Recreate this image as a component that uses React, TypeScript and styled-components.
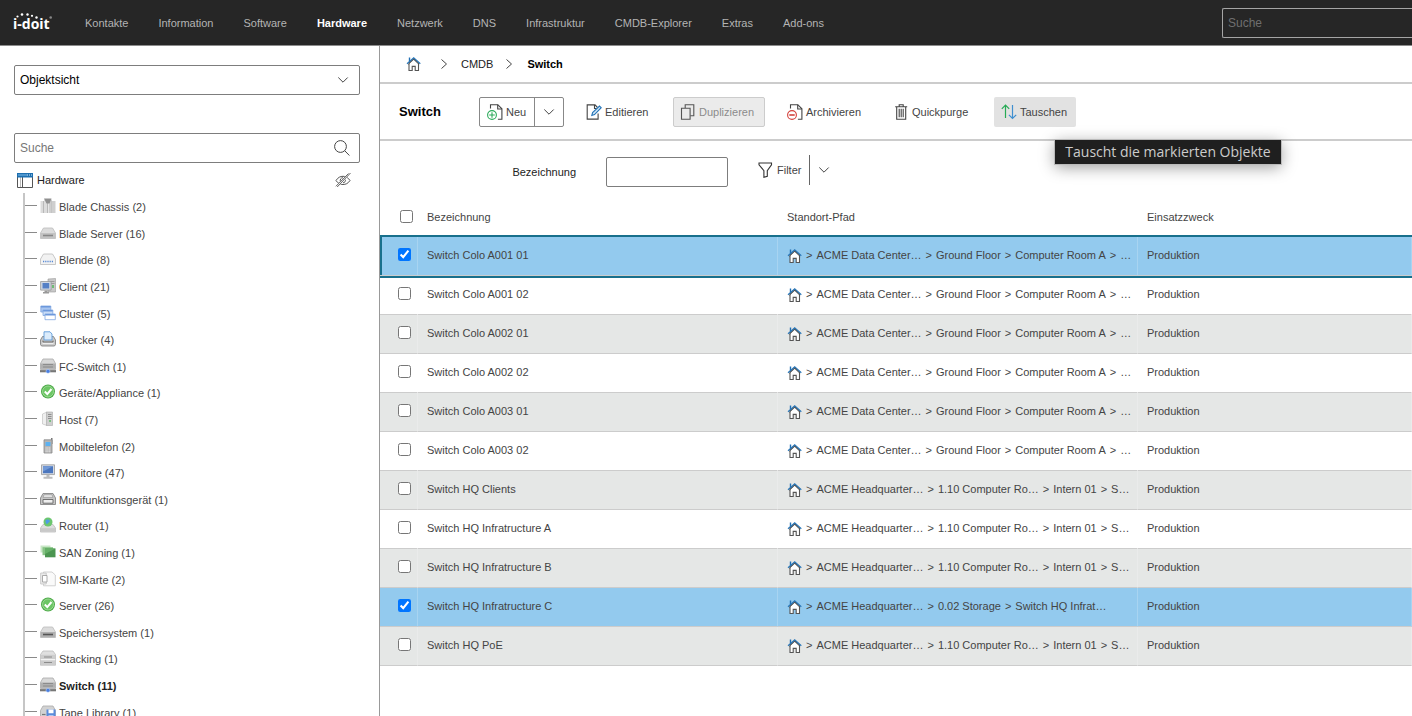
import React from "react";
import styled, { createGlobalStyle, css } from "styled-components";

const GlobalStyle = createGlobalStyle`
  *, *::before, *::after { box-sizing: border-box; }
  html, body { margin: 0; height: 100%; }
  body {
    background: #fff;
    color: #444;
    font: 11px/16px "Liberation Sans", Arial, sans-serif;
    overflow: hidden;
  }
  button, input, select { font: inherit; color: inherit; margin: 0; }
  svg { display: block; flex: none; }
`;

/* ---------- shell ---------- */

const Shell = styled.div`
  display: flex;
  flex-direction: column;
  height: 100vh;
`;

const TopBar = styled.header`
  flex: none;
  display: flex;
  align-items: center;
  height: 46px;
  padding-left: 13px;
  background: #262626;
  border-bottom: 1px solid #8c8c8c;
`;

const HomeLink = styled.a`
  display: block;
  width: 72px;
`;

const Nav = styled.nav`
  flex: 1;
  display: flex;
  gap: 30px;
`;

const NavLink = styled.a<{ $active?: boolean }>`
  color: ${(p) => (p.$active ? "#fff" : "#b4b4b4")};
  font-weight: ${(p) => (p.$active ? 700 : 400)};
  text-decoration: none;
  white-space: nowrap;
`;

const GlobalSearch = styled.input`
  width: 190px;
  height: 30px;
  padding: 0 5px;
  border: 1px solid #a5a5a5;
  border-right: 0;
  border-radius: 2px 0 0 2px;
  background: transparent;
  color: #ccc;
  font-size: 12px;
  &::placeholder { color: #6f6f6f; opacity: 1; }
`;

const Columns = styled.div`
  flex: 1;
  display: flex;
  min-height: 0;
`;

/* ---------- sidebar ---------- */

const Sidebar = styled.aside`
  flex: none;
  width: 380px;
  padding: 19px 19px 0 14px;
  border-right: 1px solid #999;
  overflow: hidden;
`;

const Field = styled.div`
  position: relative;
  height: 30px;
  > svg {
    position: absolute;
    top: 7px;
    right: 10px;
    pointer-events: none;
  }
  & + & { margin-top: 38px; }
`;

const fieldBox = css`
  width: 100%;
  height: 30px;
  padding: 0 5px;
  border: 1px solid #7d7d7d;
  border-radius: 2px;
  background: #fff;
  color: #000;
  font-size: 12px;
  &::placeholder { color: #777; opacity: 1; }
`;

const ViewSelect = styled.select`
  ${fieldBox}
  appearance: none;
`;

const TreeSearch = styled.input`
  ${fieldBox}
`;

const TreeBlock = styled.section`
  padding-top: 8px;
`;

const TreeHead = styled.div`
  display: flex;
  align-items: center;
  gap: 4px;
  height: 18px;
  margin-bottom: 4px;
  padding: 0 9px 0 3px;
  color: #222;
`;

const IconButton = styled.button`
  margin-left: auto;
  padding: 0;
  border: 0;
  background: none;
`;

const Tree = styled.ul`
  display: grid;
  grid-auto-rows: 1fr;
  height: 532px;
  margin: 0 0 0 9px;
  padding: 0;
  border-left: 2px solid #c6c6c6;
  list-style: none;
`;

const TreeItem = styled.li`
  display: flex;
  align-items: center;
  &::before {
    content: "";
    width: 12px;
    height: 1px;
    margin: 0 3px 1px 0;
    background: #8a8a8a;
  }
`;

const TreeLink = styled.a<{ $active?: boolean }>`
  display: flex;
  align-items: center;
  gap: 3px;
  color: ${(p) => (p.$active ? "#222" : "#444")};
  font-weight: ${(p) => (p.$active ? 700 : 400)};
  text-decoration: none;
`;

const TreeLabel = styled.span`
  padding-top: 2px;
`;

/* ---------- main ---------- */

const Main = styled.main`
  flex: 1;
  min-width: 0;
  overflow: hidden;
`;

const Crumbs = styled.nav`
  display: flex;
  align-items: center;
  height: 38px;
  padding-left: 26px;
  border-bottom: 2px solid #ccc;
`;

const CrumbLink = styled.a<{ $current?: boolean }>`
  color: ${(p) => (p.$current ? "#000" : "#222")};
  font-weight: ${(p) => (p.$current ? 700 : 400)};
  text-decoration: none;
`;

const CrumbArrow = styled.span<{ $before: number; $after: number }>`
  padding: 0 ${(p) => p.$after}px 0 ${(p) => p.$before}px;
`;

const Toolbar = styled.div`
  display: flex;
  align-items: center;
  gap: 15px;
  height: 57px;
  padding-left: 19px;
  border-bottom: 2px solid #ccc;
`;

const Title = styled.h1`
  width: 65px;
  margin: 0;
  color: #000;
  font-size: 13px;
  line-height: 16px;
`;

const SplitButton = styled.div`
  display: flex;
  height: 30px;
  border: 1px solid #888;
  border-radius: 2px;
`;

const SplitMain = styled.button`
  display: flex;
  align-items: center;
  gap: 3px;
  width: 54px;
  padding: 0 7px;
  border: 0;
  background: none;
`;

const SplitToggle = styled.button`
  display: grid;
  place-items: center;
  width: 29px;
  padding: 0;
  border: 0;
  border-left: 1px solid #888;
  background: none;
`;

const ToolButton = styled.button<{ $width: number; $hover?: boolean }>`
  position: relative;
  display: flex;
  align-items: center;
  gap: 3px;
  min-width: ${(p) => p.$width}px;
  height: 30px;
  padding: 0 6px;
  border: 1px solid transparent;
  border-radius: 2px;
  background: ${(p) => (p.$hover ? "#e2e2e2" : "transparent")};
  white-space: nowrap;
  &:disabled {
    border-color: #ccc;
    background: #ebebeb;
    color: #8c8c8c;
  }
`;

const Tooltip = styled.span`
  position: absolute;
  z-index: 2;
  top: 42px;
  left: 60px;
  width: 226px;
  height: 24px;
  background: #1f1f1f;
  box-shadow: 0 0 0 1px #bbb, 0 3px 16px rgba(0, 0, 0, 0.4);
  color: #ccc;
  font: 14px/23px "Open Sans", "Noto Sans", sans-serif;
  text-align: center;
`;

const FilterBar = styled.form`
  display: flex;
  height: 57px;
  padding-top: 14px;
`;

const FilterLabel = styled.label`
  width: 196px;
  margin-right: 30px;
  color: #222;
  line-height: 34px;
  text-align: right;
`;

const FilterInput = styled.input`
  width: 122px;
  height: 30px;
  margin: 2px 22px 0 0;
  padding: 0 5px;
  border: 1px solid #7d7d7d;
  border-radius: 2px;
`;

const FilterButton = styled.button`
  display: flex;
  align-items: center;
  gap: 4px;
  width: 60px;
  height: 30px;
  padding: 0 8px;
  border: 0;
  border-right: 1px solid #666;
  background: none;
`;

const FilterToggle = styled.button`
  display: grid;
  place-items: center;
  width: 28px;
  height: 30px;
  padding: 0;
  border: 0;
  background: none;
`;

/* ---------- object table ---------- */

const Table = styled.table`
  width: 100%;
  border-collapse: separate;
  border-spacing: 0;
  table-layout: fixed;
`;

const Col = styled.col<{ $width?: number }>`
  width: ${(p) => (p.$width ? `${p.$width}px` : "auto")};
`;

const HeadCell = styled.th`
  height: 39px;
  padding: 0 0 2px 9px;
  font-weight: 400;
  text-align: left;
  &:first-child { padding-left: 20px; }
`;

const Cell = styled.td`
  height: 39px;
  padding: 0 0 2px 9px;
  border-right: 1px solid rgba(255, 255, 255, 0.2);
  border-bottom: 1px solid #ccc;
  white-space: nowrap;
  &:first-child { padding: 0 0 3px 18px; }
`;

const Row = styled.tr<{ $tone: "plain" | "grey" | "picked"; $focused?: boolean }>`
  background: ${(p) => ({ plain: "#fff", grey: "#e5e7e6", picked: "#93caee" })[p.$tone]};
  ${(p) =>
    p.$focused &&
    css`
      outline: 2px solid #18708c;
      td:first-child { box-shadow: inset 2px 0 #18708c; }
    `}
`;

const Check = styled.input`
  display: block;
  width: 13px;
  height: 13px;
`;

const Path = styled.div`
  display: flex;
  align-items: center;
  gap: 4px;
  > svg { position: relative; top: 1px; }
`;

/* ---------- line icons ---------- */

const Chevron = () => (
  <svg width="14" height="16" viewBox="0 0 14 16" fill="none" stroke="#444">
    <path d="M2.300 5.500 7 10.200l4.700-4.700" />
  </svg>
);

const ChevronRight = () => (
  <svg width="8" height="12" viewBox="0 0 8 12" fill="none" stroke="#444">
    <path d="m1.500 1.500 5 4.500-5 4.500" />
  </svg>
);

const Magnifier = () => (
  <svg width="16" height="16" viewBox="0 0 16 16" fill="none" stroke="#444">
    <circle cx="6.500" cy="6.500" r="5.900" />
    <path d="m10.700 10.700 4.700 4.800" />
  </svg>
);

const HiddenEye = () => (
  <svg width="16" height="16" viewBox="0 0 16 16" fill="none" stroke="#555">
    <path d="M1 8.500C3 5.300 5.500 4.300 8 4.300s5 1 7 4.200C13 11.700 10.500 12.500 8 12.500S3 11.700 1 8.500Z" />
    <path d="M5.500 10c-.9-2.500.5-4.300 2.500-4.300M10.300 7.500c.5 1.800-.6 3.200-2.300 3.300" />
    <path d="M14.500 1.300 1.500 15" stroke="#fff" strokeWidth="2.500" />
    <path d="M15.500 1 2.200 15M13.500 1.500 .9 14.300" strokeWidth=".9" />
  </svg>
);

const WindowIcon = () => (
  <svg width="16" height="16" viewBox="0 0 16 16">
    <path d="M.5 4.500v11h15v-11" fill="#fff" stroke="#555" />
    <path d="M5.500 5v10" stroke="#555" />
    <path d="M3.500 5v10" stroke="#bbb" />
    <path d="M0 1h16v4.500H0z" fill="#1d6fb0" />
    <path d="M1 3h9" stroke="#7fbbe8" />
    <path d="M10 3h5" stroke="#d8ecfa" strokeDasharray="1 1" />
  </svg>
);

const House = () => (
  <svg width="15" height="16" viewBox="0 0 15 16" fill="none">
    <path d="M3 7v7.500h3.200v-4.100h3v4.100h3.300V7L7.700 2.800z" fill="#fff" stroke="#555" strokeWidth="1.100" />
    <path d="M3.500 1.500v4" stroke="#1f6fb5" strokeWidth="1.400" />
    <path d="M1 7.800 7.700 1.700l6.600 6.100" stroke="#2a77b8" strokeWidth="1.200" />
    <path d="M2.200 8.600 7.700 3.500l5.400 5.100" stroke="#555" strokeWidth=".7" />
  </svg>
);

const NewPage = () => (
  <svg width="16" height="16" viewBox="0 0 16 16" fill="none" stroke="#444" strokeWidth="1.100">
    <path d="M3.500 4.500V.7h7.300l4.100 4.100v10.500h-4" />
    <path d="M10.700 .8v4.200h4.200" />
    <circle cx="5" cy="11" r="4.400" stroke="#2bab5a" />
    <path d="M5 8.200v5.600M2.200 11h5.600" stroke="#2bab5a" />
  </svg>
);

const EditPage = () => (
  <svg width="16" height="16" viewBox="0 0 16 16" fill="none" stroke="#444" strokeWidth="1.100">
    <path d="M11.500 3.500 9 .9H1.200v14.200h10.900V9.500" />
    <path d="M8.500 1v3.500h2" />
    <path d="m5.800 11.500.8-2.900L13.500 2l1.700 1.700-6.700 6.900z" stroke="#2575b8" fill="#cfe4f5" />
  </svg>
);

const Copies = () => (
  <svg width="16" height="16" viewBox="0 0 16 16" fill="none" stroke="#555" strokeWidth="1.100">
    <path d="M1.500 4.200h8.600v11H1.500z" />
    <path d="M5.200 4V.8h8.600v11h-3.500" />
  </svg>
);

const ArchivePage = () => (
  <svg width="16" height="16" viewBox="0 0 16 16" fill="none" stroke="#444" strokeWidth="1.100">
    <path d="M3.500 4.500V.7h7.300l4.100 4.100v10.500h-4" />
    <path d="M10.700 .8v4.200h4.200" />
    <circle cx="5" cy="11" r="4.400" stroke="#d4413c" />
    <path d="M2.300 11h5.400" stroke="#d4413c" strokeWidth="1.600" />
  </svg>
);

const Bin = () => (
  <svg width="15" height="16" viewBox="0 0 15 16" fill="none" stroke="#444" strokeWidth="1.100">
    <path d="M1.200 2.700h12M5.200 2.500V.8h4v1.700M2.700 2.800v12.400h9V2.800" />
    <path d="M5.200 4.800v8.400M7.200 4.800v8.400M9.200 4.800v8.400" />
  </svg>
);

const SwapArrows = () => (
  <svg width="16" height="16" viewBox="0 0 16 16" fill="none" strokeWidth="1.200">
    <path d="M4.500 14V1.200M.8 4.900l3.700-3.800 3.700 3.800" stroke="#27ab55" />
    <path d="M11.500 1v13.500M7.900 10.800l3.600 3.700 3.700-3.700" stroke="#3f8fd0" />
  </svg>
);

const Funnel = () => (
  <svg width="15" height="16" viewBox="0 0 15 16" fill="none" stroke="#333" strokeWidth="1.100">
    <path d="M1 1h12.500v1.900L9.300 8.600v5.700l-3.400 1V8.600L1 2.900z" />
  </svg>
);

const Logo = () => (
  <svg width="42" height="22" viewBox="0 0 42 22" role="img" aria-label="i-doit">
    <text x="0" y="17" fill="#fff" fontFamily="Open Sans" fontWeight="700" fontSize="14">
      i-doit
    </text>
    <g fill="#fff">
      <circle cx="4.500" cy="4.500" r="1.100" />
      <circle cx="9" cy="2.500" r="1.300" />
      <circle cx="14.500" cy="2.500" r="1.200" />
      <circle cx="19" cy="3.800" r="1.100" />
      <circle cx="23.500" cy="5.500" r="1.200" />
    </g>
    <circle cx="37.700" cy="5.500" r="1.300" fill="#888" />
  </svg>
);

/* ---------- object type icons ---------- */

type TypeIcon =
  | "chassis" | "blade" | "panel" | "client" | "cluster" | "printer" | "switch"
  | "ok" | "host" | "phone" | "monitor" | "mfp" | "router" | "san" | "sim"
  | "storage" | "stack" | "tape";

const Box = ({ slot = "#999", base = "#bbb" }) => (
  <>
    <path d="M3.500 3h9L15.500 8v5.500H.5V8z" fill="#dcdcdc" stroke="#bbb" strokeWidth=".8" />
    <path d="M.7 8h14.600v5.300H.7z" fill={base} />
    <path d="M3 10.500h10" stroke={slot} strokeWidth="1.600" />
  </>
);

const typeDrawings: Record<TypeIcon, React.ReactNode> = {
  chassis: (
    <>
      <path d="M.5 3h3v12h-3zM4 1.500h3.500V15H4z" fill="#dcdcdc" />
      <path d="M8.500 1.500H12V15H8.500zM12.500 3h3v12h-3z" fill="#cfcfcf" />
      <path d="M3.500 3v12M7.500 5v10M12 3v12" stroke="#b8b8b8" />
      <path d="M4 .5h7.500L9.500 5.500h-3z" fill="#909090" />
    </>
  ),
  blade: <Box slot="#888" base="#c3c3c3" />,
  panel: (
    <>
      <path d="M3.500 3h9L15.500 8v5.500H.5V8z" fill="#f2f2f2" stroke="#bbb" strokeWidth=".8" />
      <path d="M3 10.500h10" stroke="#5588d4" strokeWidth="1.600" strokeDasharray="1.200 1" />
    </>
  ),
  client: (
    <>
      <path d="M8 1l7.500-.5V14H8z" fill="#c8c8c8" stroke="#999" strokeWidth=".6" />
      <path d="M10.500 3.500h4M10.500 5.500h4" stroke="#888" strokeWidth=".7" />
      <path d="M13 7v3" stroke="#3fb54a" strokeWidth="1.300" />
      <path d="M.6 3.500h10.500v8.600H.6z" fill="#cfd6e2" stroke="#999" strokeWidth=".8" />
      <path d="M2.500 5h6.700v5.500H2.500z" fill="#5580c6" />
      <path d="M4.500 12.500h3V14h1.500v1.500h-6V14h1.500z" fill="#999" />
    </>
  ),
  cluster: (
    <g stroke="#7fa6df" strokeWidth=".8">
      <path d="M.8 1h10v6H.8z" fill="#a9c6f0" />
      <path d="M3 5h9.800v5.500H3z" fill="#c9dcf7" />
      <path d="M5 9h10.300v5.700H5z" fill="#fff" />
      <path d="M1 1.800h9.600M3.200 5.800h9.400M5.200 9.800h10" stroke="#6c98dc" strokeWidth="1.400" />
    </g>
  ),
  printer: (
    <>
      <path d="M2.500 5.500h11l2 3.500v4.500l-1 1.500h-13l-1-1.500V9z" fill="#c8c8c8" stroke="#777" strokeWidth=".8" />
      <path d="M4 9V.8h6L12 3v6z" fill="#dcecfb" stroke="#5d9bd8" strokeWidth=".9" />
      <path d="M3 9.500v1.500h10V9.500" fill="none" stroke="#666" />
      <path d="M2.500 12.500h11" stroke="#eee" strokeWidth="1.200" />
    </>
  ),
  switch: (
    <>
      <path d="M3 1h10l2.500 4.500v6H.5v-6z" fill="#d8d8d8" stroke="#aaa" strokeWidth=".8" />
      <path d="M.6 5.500h14.800v5.300H.6z" fill="#b0b0b0" />
      <path d="M3 6.500h10M3 9h10" stroke="#888" strokeWidth=".9" />
      <path d="M0 13.200h16" stroke="#777" strokeWidth="2.200" />
      <circle cx="8" cy="13.300" r="2" fill="#4a7fe0" stroke="#cfe0ff" strokeWidth=".5" />
    </>
  ),
  ok: (
    <>
      <circle cx="8" cy="7.500" r="7" fill="#4fac4b" />
      <circle cx="8" cy="7.500" r="5.500" fill="#6cc664" stroke="#a8e09f" strokeWidth=".8" />
      <path d="m4.800 7.500 2.500 2.600L11.500 5" fill="none" stroke="#fff" strokeWidth="2" />
    </>
  ),
  host: (
    <>
      <path d="M2.500 3l4.500-2v13.500L2.500 13z" fill="#efefef" stroke="#bbb" strokeWidth=".6" />
      <path d="M6.500 1h6v13.500h-6z" fill="#cfcfcf" stroke="#aaa" strokeWidth=".6" />
      <path d="M8 3.500h3.500M8 5.500h3.500M8 7.500h3.500" stroke="#888" strokeWidth=".9" />
      <path d="M9.300 10h1.500" stroke="#3fb54a" strokeWidth="1.500" />
    </>
  ),
  phone: (
    <>
      <path d="M11 0h1.500v6H11z" fill="#777" />
      <path d="M4 1.800h8V15H4z" fill="#b5b5b5" stroke="#888" strokeWidth=".8" />
      <path d="M5.500 4h5v4h-5z" fill="#5cb1f0" />
      <path d="M5.500 10h5M5.500 12h5M5.500 13.800h5" stroke="#eee" strokeWidth=".9" strokeDasharray="1.200 .6" />
    </>
  ),
  monitor: (
    <>
      <path d="M1.500 .8h13v9.800h-13z" fill="#d4d9e2" stroke="#999" strokeWidth=".8" />
      <path d="M3 2.200h10v7H3z" fill="#4c77be" />
      <path d="M3 2.200h10L3 7.500z" fill="#7199d6" />
      <path d="M6.500 11h3v1.800h3v2h-9v-2h3z" fill="#bdbdbd" />
    </>
  ),
  mfp: (
    <>
      <path d="M3 2.500h10l2.500 4.500v6.500H.5V7z" fill="#c5c5c5" stroke="#888" strokeWidth=".9" />
      <path d="M4 3.800h8l1 2.500H3z" fill="#eee" stroke="#888" strokeWidth=".6" />
      <path d="M3 8.500h10v3.700H3z" fill="#eee" stroke="#666" strokeWidth=".9" />
    </>
  ),
  router: (
    <>
      <path d="M3 7.500h10l2.500 3.500v4H.5v-4z" fill="#dedede" stroke="#bbb" strokeWidth=".8" />
      <path d="M.7 11.200h14.600v3.600H.7z" fill="#c9c9c9" />
      <circle cx="8" cy="5" r="4.500" fill="#6cc66e" />
      <path d="M5.500 3.500c1.500-1.500 4-1 4.300.6.200 1.600-2 1.500-2.600 3.200-1.200-.5-2-2.300-1.700-3.800z" fill="#4f9be6" />
    </>
  ),
  san: (
    <>
      <path d="M.5 1.500h10v7H.5z" fill="#c8e6c6" />
      <path d="M2.500 3.200h10.500v8H2.500z" fill="#86c384" />
      <path d="M5 4.500h10.500v8.800H5z" fill="#4b9550" />
      <path d="M5 4.500h10.500L5 10z" fill="#65b067" />
    </>
  ),
  sim: (
    <>
      <path d="M6 1h6l3.300 3v10.800H3.500V1z" fill="#fafafa" stroke="#ccc" strokeWidth=".9" />
      <path d="M.7 2h5.500v11H.7z" fill="#ececec" stroke="#c6c6c6" strokeWidth=".9" />
      <path d="M2.500 4.500h4.500v6.500H2.500z" fill="#fff" stroke="#999" strokeWidth=".8" />
    </>
  ),
  storage: <Box slot="#555" base="#b0b0b0" />,
  stack: (
    <>
      <path d="M3 1h10l2.500 3.500v10.700H.5V4.500z" fill="#e0e0e0" stroke="#bbb" strokeWidth=".8" />
      <path d="M.7 4.800h14.600v4.500H.7zM.7 10.200h14.600V15H.7z" fill="#cdcdcd" />
      <path d="M4 7h8M4 12.500h8" stroke="#8c8c8c" strokeWidth="1.200" />
      <path d="M.7 9.700h14.600" stroke="#fff" strokeWidth=".8" />
    </>
  ),
  tape: (
    <>
      <path d="M3 2h10l2.500 4.500v8.700H.5V6.500z" fill="#d2d2d2" stroke="#aaa" strokeWidth=".8" />
      <path d="M6.500 5.500h9v9.700h-9z" fill="#5a8bdb" />
      <path d="M8.500 5.500h5v3.800h-5zM8.500 11.500h5v3.700h-5z" fill="#fff" />
      <path d="M2 10.500h3.500" stroke="#777" strokeWidth="1.200" />
    </>
  ),
};

const ObjectIcon = ({ type }: { type: TypeIcon }) => (
  <svg width="16" height="16" viewBox="0 0 16 16" aria-hidden="true">
    {typeDrawings[type]}
  </svg>
);

/* ---------- data ---------- */

const navItems = [
  "Kontakte", "Information", "Software", "Hardware", "Netzwerk",
  "DNS", "Infrastruktur", "CMDB-Explorer", "Extras", "Add-ons",
];

const objectTypes: [string, number, TypeIcon][] = [
  ["Blade Chassis", 2, "chassis"],
  ["Blade Server", 16, "blade"],
  ["Blende", 8, "panel"],
  ["Client", 21, "client"],
  ["Cluster", 5, "cluster"],
  ["Drucker", 4, "printer"],
  ["FC-Switch", 1, "switch"],
  ["Geräte/Appliance", 1, "ok"],
  ["Host", 7, "host"],
  ["Mobiltelefon", 2, "phone"],
  ["Monitore", 47, "monitor"],
  ["Multifunktionsgerät", 1, "mfp"],
  ["Router", 1, "router"],
  ["SAN Zoning", 1, "san"],
  ["SIM-Karte", 2, "sim"],
  ["Server", 26, "ok"],
  ["Speichersystem", 1, "storage"],
  ["Stacking", 1, "stack"],
  ["Switch", 11, "switch"],
  ["Tape Library", 1, "tape"],
];

const colo = ["ACME Data Center…", "Ground Floor", "Computer Room A", "…"];
const hq = ["ACME Headquarter…", "1.10 Computer Ro…", "Intern 01", "S…"];
const hqStorage = ["ACME Headquarter…", "0.02 Storage", "Switch HQ Infrat…"];

const objects: { name: string; path: string[]; picked?: boolean }[] = [
  { name: "Switch Colo A001 01", path: colo, picked: true },
  { name: "Switch Colo A001 02", path: colo },
  { name: "Switch Colo A002 01", path: colo },
  { name: "Switch Colo A002 02", path: colo },
  { name: "Switch Colo A003 01", path: colo },
  { name: "Switch Colo A003 02", path: colo },
  { name: "Switch HQ Clients", path: hq },
  { name: "Switch HQ Infratructure A", path: hq },
  { name: "Switch HQ Infratructure B", path: hq },
  { name: "Switch HQ Infratructure C", path: hqStorage, picked: true },
  { name: "Switch HQ PoE", path: hq },
];

/* ---------- page ---------- */

export default function App() {
  return (
    <Shell>
      <GlobalStyle />
      <TopBar>
        <HomeLink href="#"><Logo /></HomeLink>
        <Nav>
          {navItems.map((item) => (
            <NavLink key={item} href="#" $active={item === "Hardware"}>{item}</NavLink>
          ))}
        </Nav>
        <GlobalSearch type="text" placeholder="Suche" aria-label="Globale Suche" />
      </TopBar>

      <Columns>
        <Sidebar>
          <Field>
            <ViewSelect aria-label="Ansicht" defaultValue="Objektsicht">
              <option>Objektsicht</option>
            </ViewSelect>
            <Chevron />
          </Field>
          <Field>
            <TreeSearch type="text" placeholder="Suche" aria-label="Objekttyp suchen" />
            <Magnifier />
          </Field>
          <TreeBlock>
            <TreeHead>
              <WindowIcon />
              Hardware
              <IconButton type="button" aria-label="Leere ausblenden"><HiddenEye /></IconButton>
            </TreeHead>
            <Tree>
              {objectTypes.map(([name, count, icon]) => (
                <TreeItem key={name}>
                  <TreeLink href="#" $active={name === "Switch"}>
                    <ObjectIcon type={icon} />
                    <TreeLabel>{name} ({count})</TreeLabel>
                  </TreeLink>
                </TreeItem>
              ))}
            </Tree>
          </TreeBlock>
        </Sidebar>

        <Main>
          <Crumbs>
            <CrumbLink href="#" aria-label="Start"><House /></CrumbLink>
            <CrumbArrow $before={19} $after={13}><ChevronRight /></CrumbArrow>
            <CrumbLink href="#">CMDB</CrumbLink>
            <CrumbArrow $before={12} $after={14}><ChevronRight /></CrumbArrow>
            <CrumbLink href="#" $current>Switch</CrumbLink>
          </Crumbs>

          <Toolbar>
            <Title>Switch</Title>
            <SplitButton>
              <SplitMain type="button"><NewPage />Neu</SplitMain>
              <SplitToggle type="button" aria-label="Weitere Optionen"><Chevron /></SplitToggle>
            </SplitButton>
            <ToolButton type="button" $width={79}><EditPage />Editieren</ToolButton>
            <ToolButton type="button" $width={92} disabled><Copies />Duplizieren</ToolButton>
            <ToolButton type="button" $width={92}><ArchivePage />Archivieren</ToolButton>
            <ToolButton type="button" $width={92}><Bin />Quickpurge</ToolButton>
            <ToolButton type="button" $width={82} $hover aria-describedby="swap-tip">
              <SwapArrows />Tauschen
              <Tooltip id="swap-tip" role="tooltip">Tauscht die markierten Objekte</Tooltip>
            </ToolButton>
          </Toolbar>

          <FilterBar>
            <FilterLabel htmlFor="filter-name">Bezeichnung</FilterLabel>
            <FilterInput id="filter-name" type="text" />
            <FilterButton type="button"><Funnel />Filter</FilterButton>
            <FilterToggle type="button" aria-label="Filteroptionen"><Chevron /></FilterToggle>
          </FilterBar>

          <Table>
            <colgroup>
              <Col $width={38} />
              <Col $width={360} />
              <Col $width={360} />
              <Col />
            </colgroup>
            <thead>
              <tr>
                <HeadCell><Check type="checkbox" aria-label="Alle auswählen" /></HeadCell>
                <HeadCell>Bezeichnung</HeadCell>
                <HeadCell>Standort-Pfad</HeadCell>
                <HeadCell>Einsatzzweck</HeadCell>
              </tr>
            </thead>
            <tbody>
              {objects.map(({ name, path, picked }, index) => (
                <Row
                  key={name}
                  $tone={picked ? "picked" : index % 2 ? "plain" : "grey"}
                  $focused={index === 0}
                >
                  <Cell><Check type="checkbox" defaultChecked={picked} aria-label={name} /></Cell>
                  <Cell>{name}</Cell>
                  <Cell>
                    <Path>
                      <House />
                      {path.map((step) => (
                        <React.Fragment key={step}>
                          <span>&gt;</span>
                          <span>{step}</span>
                        </React.Fragment>
                      ))}
                    </Path>
                  </Cell>
                  <Cell>Produktion</Cell>
                </Row>
              ))}
            </tbody>
          </Table>
        </Main>
      </Columns>
    </Shell>
  );
}
